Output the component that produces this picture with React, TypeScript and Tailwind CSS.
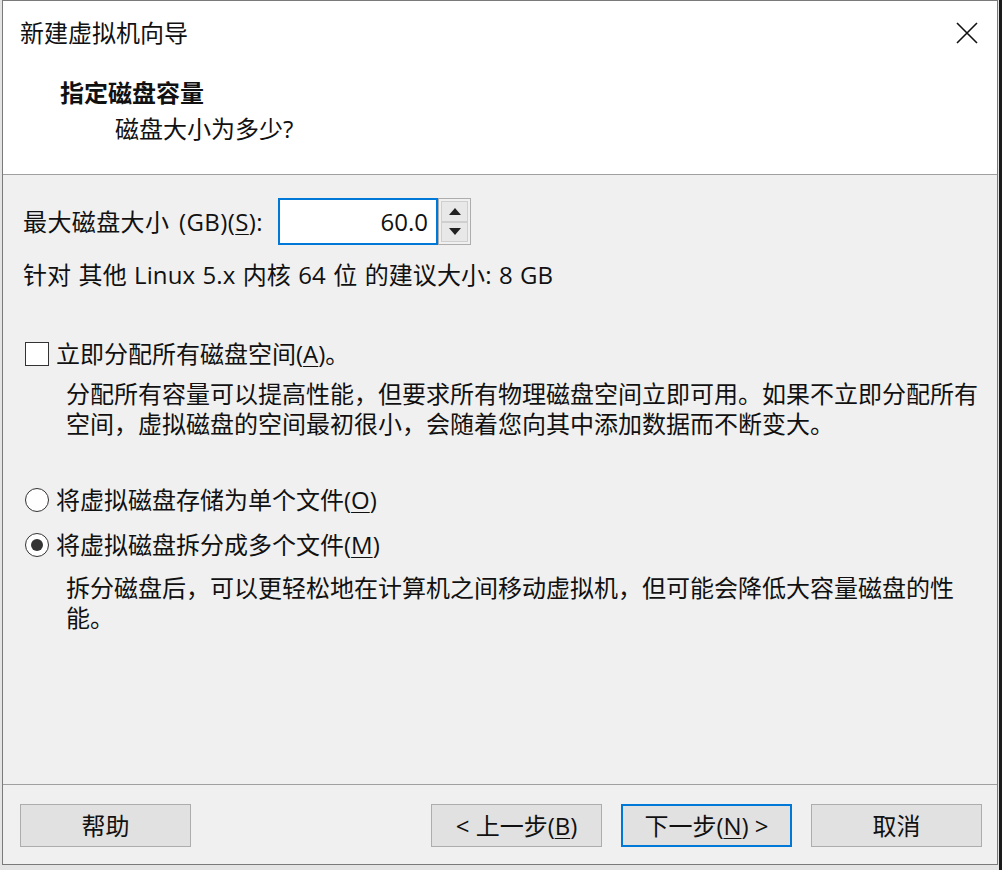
import React from "react";

const font = { fontFamily: '"Open Sans", "Noto Sans CJK SC", sans-serif' };

// underlined access key inside a label, e.g. (S)
function Key({ k }: { k: string }) {
  return (
    <>
      (<span className="underline underline-offset-[3px] decoration-1">{k}</span>)
    </>
  );
}

function CloseIcon() {
  return (
    <svg width="22" height="22" viewBox="0 0 22 22" className="text-[#111]">
      <path d="M1 1 L21 21 M21 1 L1 21" stroke="currentColor" strokeWidth="1.6" fill="none" />
    </svg>
  );
}

function Spinner() {
  return (
    <div className="flex h-[47px] w-[33px] flex-col border border-[#adadad] bg-[#f0f0f0] p-[2px]">
      <div className="flex flex-1 items-center justify-center border border-[#cfcfcf] bg-[#e8e8e8]">
        <svg width="12" height="7" viewBox="0 0 12 7">
          <path d="M0 7 L6 0 L12 7 Z" fill="#222" />
        </svg>
      </div>
      <div className="flex flex-1 items-center justify-center border border-[#cfcfcf] bg-[#e8e8e8]">
        <svg width="12" height="7" viewBox="0 0 12 7">
          <path d="M0 0 L6 7 L12 0 Z" fill="#222" />
        </svg>
      </div>
    </div>
  );
}

function Checkbox() {
  return <span className="mr-[7px] inline-block h-[24px] w-[24px] shrink-0 border-[1.5px] border-[#333] bg-white" />;
}

function Radio({ checked }: { checked?: boolean }) {
  return (
    <span className="mr-[7px] flex h-[24px] w-[24px] shrink-0 items-center justify-center rounded-full border-[1.5px] border-[#333] bg-white">
      {checked ? <span className="h-[12px] w-[12px] rounded-full bg-[#333]" /> : null}
    </span>
  );
}

function Button({ children, primary }: { children: React.ReactNode; primary?: boolean }) {
  return (
    <button
      type="button"
      className={
        "flex h-[43px] w-[171px] items-center justify-center bg-[#e1e1e1] text-[24px] text-[#111] " +
        (primary ? "border-2 border-[#0078d7]" : "border border-[#adadad]")
      }
    >
      {children}
    </button>
  );
}

export default function App() {
  return (
    <div className="flex h-[870px] w-[1002px] bg-[#e4e4e4]" style={font}>
      <div className="ml-[2px] flex h-[865px] w-[996px] flex-col border border-[#7a7a7a] bg-[#f0f0f0] text-[#111]">
        {/* title + page header */}
        <header className="h-[174px] shrink-0 border-b border-[#a0a0a0] bg-white">
          <div className="flex h-[64px] items-center justify-between pl-[17px] pr-[19px]">
            <span className="text-[24px] leading-[30px]">新建虚拟机向导</span>
            <CloseIcon />
          </div>
          <h1 className="mt-[13px] pl-[57px] text-[24px] font-bold leading-[30px]">指定磁盘容量</h1>
          <p className="mt-[6px] pl-[112px] text-[24px] leading-[30px]">磁盘大小为多少?</p>
        </header>

        {/* body */}
        <main className="flex-1 pl-[20px] text-[24px]">
          <div className="mt-[23px] flex h-[47px] items-center">
            <label className="w-[255px] whitespace-nowrap leading-[30px] tracking-[0.4px] [word-spacing:3px]">
              最大磁盘大小 (GB)<Key k="S" />:
            </label>
            <div className="flex h-[47px] w-[160px] items-center justify-end border-2 border-[#0078d7] bg-white pr-[8px] leading-[30px]">
              60.0
            </div>
            <Spinner />
          </div>

          <p className="mt-[15px] whitespace-nowrap leading-[30px] tracking-[0.1px] [word-spacing:1px]">
            针对 其他 Linux 5.x 内核 64 位 的建议大小: 8 GB
          </p>

          <div className="mt-[49px] flex h-[30px] items-center pl-[2px]">
            <Checkbox />
            <span className="whitespace-nowrap leading-[30px]">
              立即分配所有磁盘空间<Key k="A" />。
            </span>
          </div>
          <p className="mt-[10px] pl-[43px] leading-[30px] whitespace-nowrap">
            分配所有容量可以提高性能，但要求所有物理磁盘空间立即可用。如果不立即分配所有
            <br />
            空间，虚拟磁盘的空间最初很小，会随着您向其中添加数据而不断变大。
          </p>

          <div className="mt-[46px] flex h-[30px] items-center pl-[2px]">
            <Radio />
            <span className="whitespace-nowrap leading-[30px]">
              将虚拟磁盘存储为单个文件<Key k="O" />
            </span>
          </div>
          <div className="mt-[15px] flex h-[30px] items-center pl-[2px]">
            <Radio checked />
            <span className="whitespace-nowrap leading-[30px]">
              将虚拟磁盘拆分成多个文件<Key k="M" />
            </span>
          </div>
          <p className="mt-[13px] pl-[43px] leading-[30px] whitespace-nowrap">
            拆分磁盘后，可以更轻松地在计算机之间移动虚拟机，但可能会降低大容量磁盘的性
            <br />
            能。
          </p>
        </main>

        {/* footer buttons */}
        <footer className="flex h-[80px] shrink-0 items-start justify-between border-t border-[#a0a0a0] pl-[17px] pr-[15px] pt-[19px]">
          <Button>帮助</Button>
          <div className="flex gap-[19px]">
            <Button>
              &lt; 上一步<Key k="B" />
            </Button>
            <Button primary>
              下一步<Key k="N" /> &gt;
            </Button>
            <Button>取消</Button>
          </div>
        </footer>
      </div>
      <div className="ml-[1px] h-full w-[3px] bg-[#1a1a1a]" />
    </div>
  );
}
